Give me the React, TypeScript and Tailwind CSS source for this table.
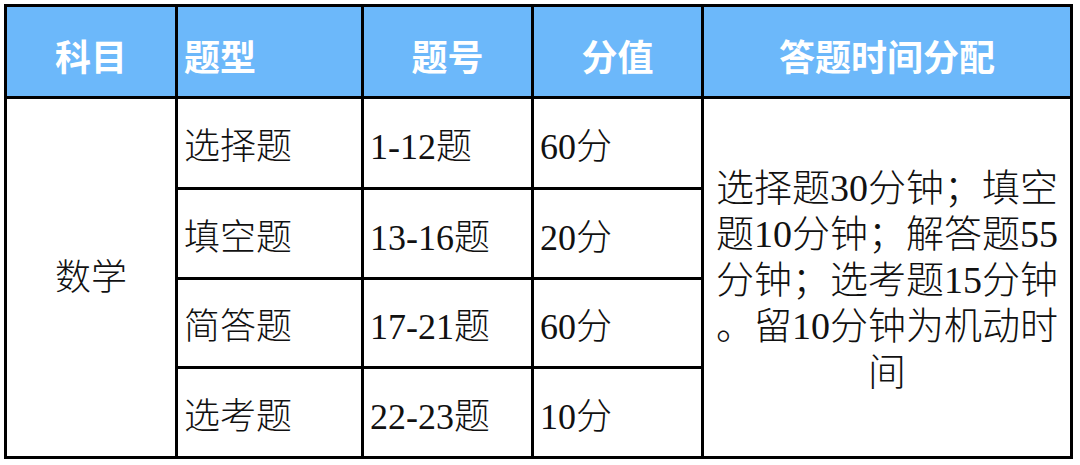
import React from "react"

const HEAD = "font-['Noto_Sans_CJK_SC',sans-serif] text-[36px] font-bold text-white bg-[#6cb8fa] flex items-center"
const BODY = "font-['Liberation_Serif','Noto_Sans_CJK_SC',serif] text-[36px] font-light text-[#111] bg-white flex items-center"

const ROWS = [
  { type: "选择题", range: "1-12题", score: "60分" },
  { type: "填空题", range: "13-16题", score: "20分" },
  { type: "简答题", range: "17-21题", score: "60分" },
  { type: "选考题", range: "22-23题", score: "10分" },
]

const TIME_LINES = [
  "选择题30分钟；填空",
  "题10分钟；解答题55",
  "分钟；选考题15分钟",
  "。留10分钟为机动时",
  "间",
]

export default function App() {
  return (
    <div className="w-[1080px] h-[465px] bg-white pl-[4px] pt-[4px]">
      <div className="grid w-fit grid-cols-[168px_183px_167px_167px_366px] grid-rows-[89px_88px_87px_86px_87px] gap-[3px] bg-black p-[3px]">
        {/* 表头 */}
        <div className={`${HEAD} justify-center pt-[6px]`}>科目</div>
        <div className={`${HEAD} pl-[6px] pt-[6px]`}>题型</div>
        <div className={`${HEAD} justify-center pt-[6px]`}>题号</div>
        <div className={`${HEAD} justify-center pt-[6px]`}>分值</div>
        <div className={`${HEAD} justify-center pt-[6px]`}>答题时间分配</div>

        {/* 科目 */}
        <div className={`${BODY} row-start-2 row-span-4 col-start-1 justify-center`}>数学</div>

        {ROWS.map((r, i) => (
          <React.Fragment key={r.type}>
            <div className={`${BODY} col-start-2 pl-[6px] pt-[8px]`} style={{ gridRowStart: i + 2 }}>
              {r.type}
            </div>
            <div className={`${BODY} col-start-3 pl-[6px] pt-[8px]`} style={{ gridRowStart: i + 2 }}>
              {r.range}
            </div>
            <div className={`${BODY} col-start-4 pl-[6px] pt-[8px]`} style={{ gridRowStart: i + 2 }}>
              {r.score}
            </div>
          </React.Fragment>
        ))}

        {/* 答题时间分配 */}
        <div className={`${BODY} row-start-2 row-span-4 col-start-5 flex-col justify-center pt-[4px] text-[38px] leading-[46px]`}>
          {TIME_LINES.map((line) => (
            <span key={line} className="whitespace-nowrap text-center">
              {line}
            </span>
          ))}
        </div>
      </div>
    </div>
  )
}
